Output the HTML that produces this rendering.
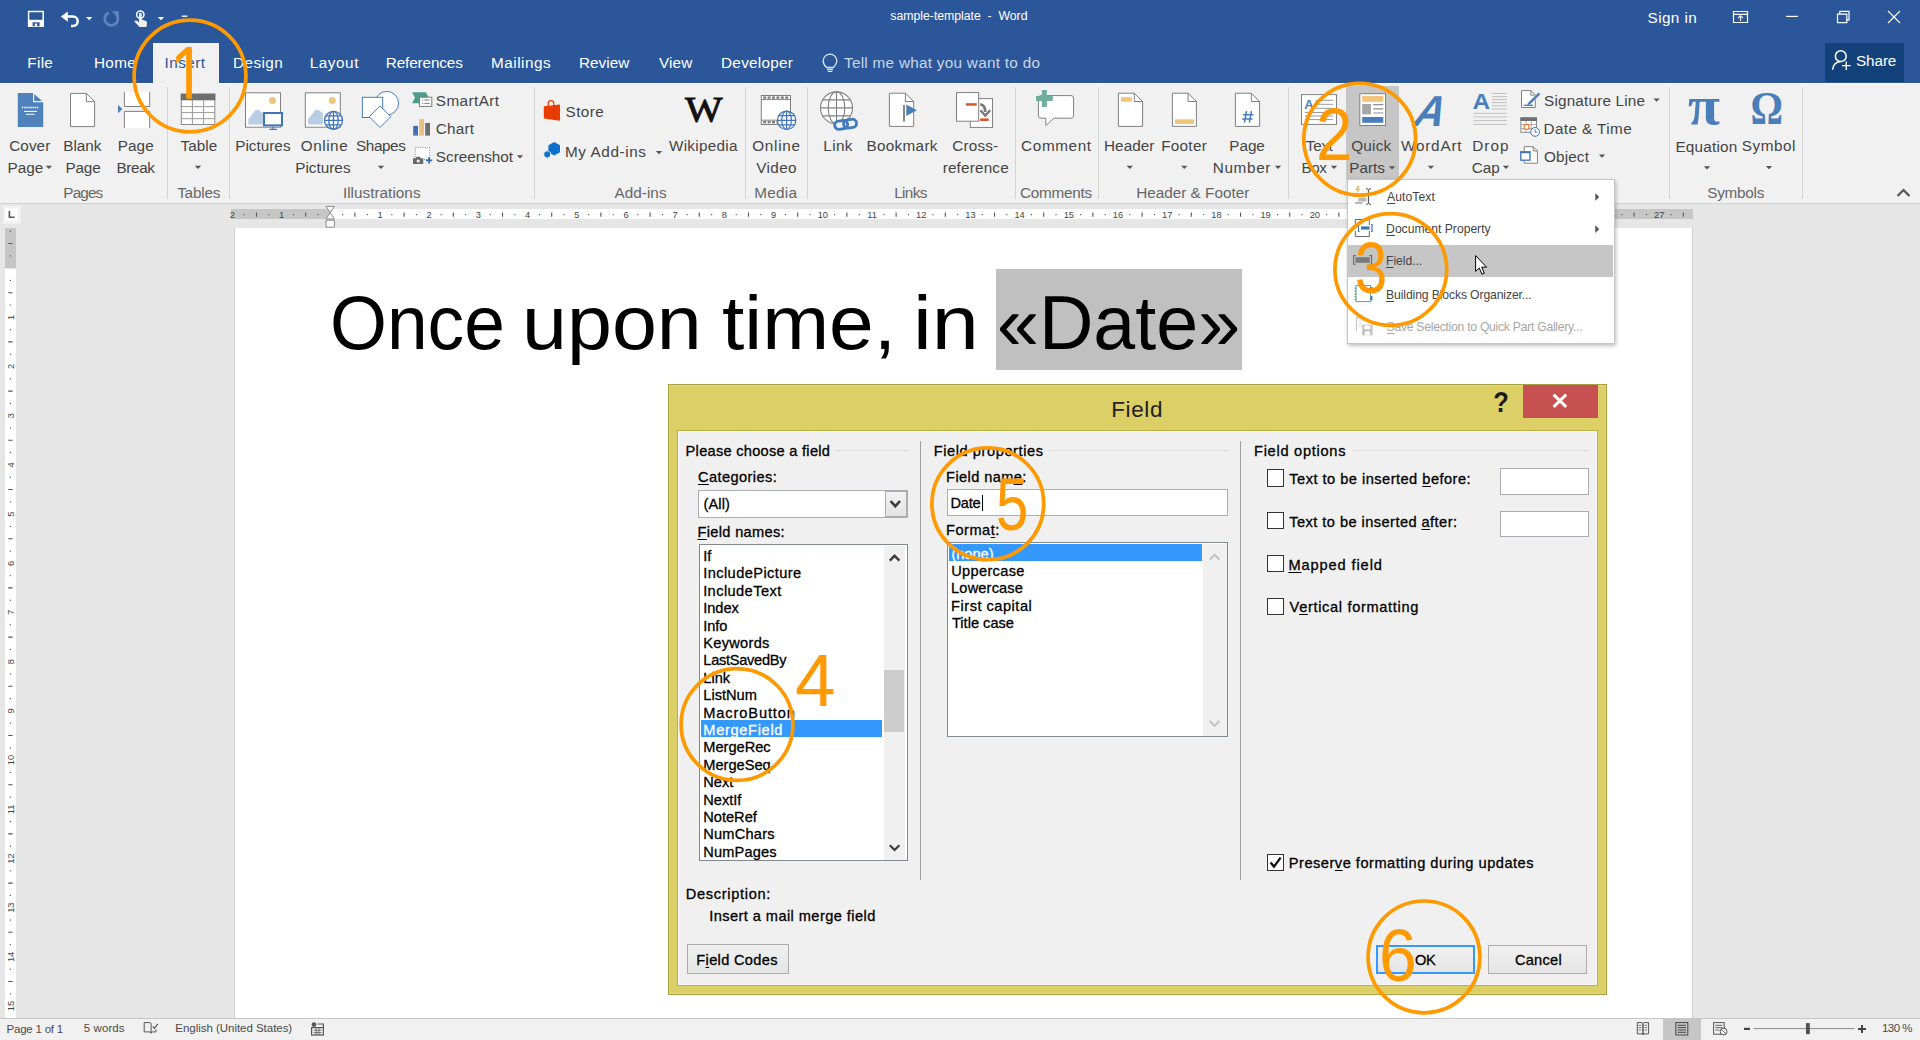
<!DOCTYPE html><html lang="en"><head><meta charset="utf-8"><title>sample-template - Word</title><style>
*{margin:0;padding:0;box-sizing:border-box}
html,body{width:1920px;height:1040px;overflow:hidden;background:#E6E6E6;font-family:"Liberation Sans",sans-serif}
.t{position:absolute;white-space:pre;line-height:1;display:block}
.t u{text-decoration:underline;text-decoration-thickness:1px;text-underline-offset:1.5px}
.a{position:absolute}
svg.L{position:absolute;left:0;top:0;width:1920px;height:1040px;overflow:visible}
.layer{position:absolute;left:0;top:0;width:1920px;height:1040px}
</style></head><body>
<div class="layer" id="app">
<div class="a" style="left:0.00px;top:0.00px;width:1920.00px;height:83.00px;background:#2B579A;"></div>
<div class="a" style="left:153.00px;top:43.00px;width:66.00px;height:40.00px;background:#F1F1F1;"></div>
<div class="a" style="left:1825.00px;top:43.00px;width:79.00px;height:38.80px;background:#13417A;"></div>
<div class="a" style="left:0.00px;top:83.00px;width:1920.00px;height:120.00px;background:#F1F1F1;"></div>
<div class="a" style="left:0.00px;top:82.60px;width:153.00px;height:1.20px;background:#FBFBFB;"></div>
<div class="a" style="left:219.00px;top:82.60px;width:1701.00px;height:1.20px;background:#FBFBFB;"></div>
<div class="a" style="left:0.00px;top:203.00px;width:1920.00px;height:1.00px;background:#D2D2D2;"></div>
<div class="a" style="left:1346.20px;top:86.10px;width:52.60px;height:93.90px;background:#C6C6C6;"></div>
<div class="a" style="left:166.80px;top:87.00px;width:1.00px;height:111.50px;background:#D4D4D4;"></div>
<div class="a" style="left:228.90px;top:87.00px;width:1.00px;height:111.50px;background:#D4D4D4;"></div>
<div class="a" style="left:533.90px;top:87.00px;width:1.00px;height:111.50px;background:#D4D4D4;"></div>
<div class="a" style="left:744.50px;top:87.00px;width:1.00px;height:111.50px;background:#D4D4D4;"></div>
<div class="a" style="left:807.20px;top:87.00px;width:1.00px;height:111.50px;background:#D4D4D4;"></div>
<div class="a" style="left:1015.10px;top:87.00px;width:1.00px;height:111.50px;background:#D4D4D4;"></div>
<div class="a" style="left:1097.80px;top:87.00px;width:1.00px;height:111.50px;background:#D4D4D4;"></div>
<div class="a" style="left:1288.00px;top:87.00px;width:1.00px;height:111.50px;background:#D4D4D4;"></div>
<div class="a" style="left:1668.90px;top:87.00px;width:1.00px;height:111.50px;background:#D4D4D4;"></div>
<div class="a" style="left:1801.50px;top:87.00px;width:1.00px;height:111.50px;background:#D4D4D4;"></div>
<div class="a" style="left:2.70px;top:206.00px;width:18.00px;height:18.00px;background:#F1F1F1;"></div>
<div class="a" style="left:4.50px;top:208.30px;width:13.80px;height:12.40px;background:#fff;"></div>
<div class="a" style="left:231.00px;top:209.30px;width:99.00px;height:10.00px;background:#C6C6C6;"></div>
<div class="a" style="left:330.00px;top:209.30px;width:1265.00px;height:10.00px;background:#fff;"></div>
<div class="a" style="left:1595.00px;top:209.30px;width:98.00px;height:10.00px;background:#C6C6C6;"></div>
<div class="a" style="left:4.70px;top:228.30px;width:11.20px;height:40.20px;background:#C6C6C6;"></div>
<div class="a" style="left:4.70px;top:268.50px;width:11.20px;height:749.00px;background:#fff;"></div>
<div class="a" style="left:233.80px;top:228.30px;width:1459.40px;height:789.30px;background:#fff;border-left:1px solid #CFCFCF;border-right:1px solid #CFCFCF;"></div>
<div class="a" style="left:996.40px;top:269.30px;width:245.30px;height:100.50px;background:#C0C0C0;"></div>
<div class="a" style="left:0.00px;top:1017.60px;width:1920.00px;height:22.40px;background:#F1F1F1;border-top:1px solid #C6C6C6;"></div>
<div class="a" style="left:1663.00px;top:1018.60px;width:37.60px;height:21.40px;background:#C6C6C6;"></div>
<svg class="L" viewBox="0 0 1920 1040"><path d="M28.6 11.6h14.6v14.6h-14.6z" fill="none" stroke="#fff" stroke-width="1.5"/><path d="M28.6 19.8h14.6v6.4h-14.6z" fill="#fff"/><path d="M32.6 22.3h7v4h-7z" fill="#2B579A"/><path d="M34.8 23.5h2.3v2.8h-2.3z" fill="#fff"/><path d="M60.8 16.6L67.8 11.4V21.8Z" fill="#fff"/><path d="M66.5 16.6H73a4.7 4.7 0 0 1 0 9.4H71" fill="none" stroke="#fff" stroke-width="2.5"/><path d="M86.0 17.0h6.4l-3.2 3.3z" fill="#fff"/><path d="M116.2 14.2a6.6 6.6 0 1 1 -7.4 -1.6" fill="none" stroke="#6485BC" stroke-width="2.6"/><path d="M111.5 11.2h7.4v7z" fill="#6485BC"/><circle cx="140.3" cy="14.6" r="3.7" fill="none" stroke="#fff" stroke-width="1.5"/><path d="M139 14.2a1.4 1.4 0 0 1 2.8 0v5.2l4.2 1.6q1.2 .6 1 2l-.5 4h-7l-5.2-5.6q1.2-1.6 2.8-.6l1.9 1.4z" fill="#EDEDED"/><path d="M157.8 17.0h6.4l-3.2 3.3z" fill="#fff"/><path d="M181.7 16.2h5.7" stroke="#fff" stroke-width="1.3"/><path d="M1733.5 11.5h14v11h-14zM1733.5 14.3h14" fill="none" stroke="#fff" stroke-width="1.2"/><path d="M1740.5 21v-5.2M1738 18.2l2.5-2.5 2.5 2.5" fill="none" stroke="#fff" stroke-width="1.1"/><path d="M1786 16.4h12" stroke="#fff" stroke-width="1.2"/><path d="M1837.5 14.2h9.3v8.4h-9.3z" fill="none" stroke="#fff" stroke-width="1.2"/><path d="M1839.8 14v-2.6h9.2v8.4h-2.2" fill="none" stroke="#fff" stroke-width="1.2"/><path d="M1888 11l12 12M1900 11l-12 12" stroke="#fff" stroke-width="1.2"/><circle cx="1840.8" cy="56.2" r="5.4" fill="none" stroke="#fff" stroke-width="1.5"/><path d="M1832.7 69.8q.4-7.6 8-8.3" fill="none" stroke="#fff" stroke-width="1.5"/><path d="M1842 65.6h8.6M1846.3 61.4v8.6" stroke="#fff" stroke-width="1.4"/><path d="M826.5 67.5q-3.3-3.6-3.3-6.6a6.8 6.8 0 0 1 13.6 0q0 3-3.3 6.6z" fill="none" stroke="#DCE4F1" stroke-width="1.3"/><path d="M827 69.4h6M827.6 71.4h4.8" stroke="#DCE4F1" stroke-width="1.3"/><path d="M17.8 92.9H33L43.2 102V126.9H17.8Z" fill="#4F81BD"/><path d="M33.6 92.9V101.6H43.2" fill="none" stroke="#F1F1F1" stroke-width="1.2"/><path d="M21.8 107.5H39" stroke="#fff" stroke-width="1.6" stroke-dasharray="1.2 .7"/><path d="M24 111.4H37M26 114.3H34.6" stroke="#fff" stroke-width="1"/><path d="M70.5 93.4H86.3L94.6 101.7V126.6H70.5Z" fill="#fff" stroke="#808080" stroke-width="1"/><path d="M86.3 93.4V101.7H94.6" fill="none" stroke="#808080" stroke-width="1"/><path d="M124.4 92V106.5H149.7V92" fill="#fff" stroke="#808080" stroke-width="1"/><path d="M124.4 128V111.4H149.7V128" fill="#fff" stroke="#808080" stroke-width="1"/><path d="M118 105l4.4 4.1-4.4 4.1z" fill="#4A7EBB"/><rect x="181.3" y="94.2" width="33.5" height="30.3" fill="#fff" stroke="#8A8A8A" stroke-width="1"/><rect x="180.8" y="93.7" width="34.5" height="6.6" fill="#6E6E6E"/><path d="M192.4 100V124.5M203.6 100V124.5M181.3 106.6H214.8M181.3 112.6H214.8M181.3 118.7H214.8" stroke="#9A9A9A" stroke-width="1" fill="none"/><rect x="245.5" y="92.8" width="35" height="34.4" fill="#fff" stroke="#808080" stroke-width="1"/><circle cx="272.5" cy="100.5" r="3.5" fill="#EFC57C"/><path d="M248.3 124.6V119.2L255.5 110H258.9L263.1 113.6V124.6Z" fill="#B9CDE5"/><rect x="264" y="113" width="18" height="12.4" fill="#fff" stroke="#3F74B8" stroke-width="2"/><path d="M273 126.4V129.3M269.4 129.4H276.8" stroke="#3F74B8" stroke-width="1.2"/><rect x="305.3" y="92.8" width="35" height="34.4" fill="#fff" stroke="#808080" stroke-width="1"/><circle cx="332.3" cy="100.5" r="3.5" fill="#EFC57C"/><path d="M308.1 124.6V119.2L315.3 110H318.7L322.9 113.6V124.6Z" fill="#B9CDE5"/><circle cx="333.5" cy="120.4" r="9.0" fill="#fff" stroke="#3F74B8" stroke-width="1.3"/><ellipse cx="333.5" cy="120.4" rx="4.7" ry="9.0" fill="none" stroke="#3F74B8" stroke-width="1.3"/><path d="M333.5 111.4V129.4M324.5 120.4H342.5M325.8 115.9H341.2M325.8 124.9H341.2" fill="none" stroke="#3F74B8" stroke-width="1.3"/><circle cx="386.8" cy="103.2" r="11.8" fill="#fff" stroke="#4A7EBB" stroke-width="1"/><rect x="362.4" y="97.3" width="20.3" height="20.2" fill="#fff" stroke="#4A7EBB" stroke-width="1"/><path d="M380 105.9L390.8 116.7 380 127.5 369.2 116.7Z" fill="#fff" stroke="#4A7EBB" stroke-width="1"/><path d="M412 92.3H426L428.6 97.8 426 103.2H412L415 97.8Z" fill="#4E9D8C"/><rect x="419.4" y="97.2" width="12.4" height="9.2" fill="#fff" stroke="#7A7A7A" stroke-width="1"/><path d="M422 100H423.2M424.4 100H429.6M422 103.4H423.2M424.4 103.4H429.6" stroke="#7A7A7A" stroke-width="1"/><rect x="413.2" y="125.9" width="4.8" height="9.7" fill="#3F6FB5"/><rect x="419.1" y="119.2" width="4.9" height="16.4" fill="#E8C182"/><rect x="425.2" y="123" width="4.8" height="12.6" fill="#6E6E6E"/><rect x="415.3" y="147.5" width="14.4" height="12" fill="#fff" stroke="#8A8A8A" stroke-width="1" stroke-dasharray="1 1.4"/><path d="M413 158.2h2.6l1-1.4h3.2l1 1.4h2.4v5.8H413z" fill="#6A6A6A"/><circle cx="418.2" cy="161" r="1.6" fill="#F1F1F1"/><path d="M426 160.3h6.2M429.1 157.2v6.2" stroke="#2E6BB8" stroke-width="1.8"/><path d="M516.8 155.3h6.4l-3.2 3.3z" fill="#555"/><path d="M548.2 106v-2.6a2.8 2.8 0 0 1 5.6 0V106" fill="none" stroke="#EA3E00" stroke-width="1.3"/><path d="M543.8 106.3L560 104.6V120.8L543.8 118.6Z" fill="#EA3E00"/><path d="M554.3 105.2v15" stroke="#C93400" stroke-width=".6"/><path d="M554.2 142l5.8 3.2v7l-5.8 3.4-5.8-3.4v-7z" fill="#0F6FCF"/><path d="M547.2 150.6l3.3 1.9v3.8l-3.3 1.9-3.3-1.9v-3.8z" fill="#0F6FCF" stroke="#F1F1F1" stroke-width=".8"/><path d="M655.8 150.9h6.4l-3.2 3.3z" fill="#555"/><rect x="761.3" y="95.5" width="29.2" height="29" fill="#fff" stroke="#808080" stroke-width="1"/><path d="M761.3 99.6H790.5M761.3 120.2H790.5" stroke="#808080" stroke-width="1"/><rect x="763.2" y="96.4" width="3" height="2.4" fill="#808080"/><rect x="763.2" y="121" width="3" height="2.4" fill="#808080"/><rect x="767.6" y="96.4" width="3" height="2.4" fill="#808080"/><rect x="767.6" y="121" width="3" height="2.4" fill="#808080"/><rect x="772.0" y="96.4" width="3" height="2.4" fill="#808080"/><rect x="772.0" y="121" width="3" height="2.4" fill="#808080"/><rect x="776.4" y="96.4" width="3" height="2.4" fill="#808080"/><rect x="776.4" y="121" width="3" height="2.4" fill="#808080"/><rect x="780.8" y="96.4" width="3" height="2.4" fill="#808080"/><rect x="780.8" y="121" width="3" height="2.4" fill="#808080"/><rect x="785.2" y="96.4" width="3" height="2.4" fill="#808080"/><rect x="785.2" y="121" width="3" height="2.4" fill="#808080"/><circle cx="786.6" cy="120.3" r="9.2" fill="#fff" stroke="#3F74B8" stroke-width="1.2"/><ellipse cx="786.6" cy="120.3" rx="4.8" ry="9.2" fill="none" stroke="#3F74B8" stroke-width="1.2"/><path d="M786.6 111.1V129.5M777.4 120.3H795.8M778.7 115.7H794.5M778.7 124.9H794.5" fill="none" stroke="#3F74B8" stroke-width="1.2"/><circle cx="836.5" cy="107.9" r="16.0" fill="#fff" stroke="#808080" stroke-width="1.1"/><ellipse cx="836.5" cy="107.9" rx="8.3" ry="16.0" fill="none" stroke="#808080" stroke-width="1.1"/><path d="M836.5 91.9V123.9M820.5 107.9H852.5M822.7 99.9H850.3M822.7 115.9H850.3" fill="none" stroke="#808080" stroke-width="1.1"/><g transform="rotate(-8 845.5 124.3)"><rect x="834.6" y="120.2" width="13" height="8.2" rx="4.1" fill="#F1F1F1" stroke="#3F7AC0" stroke-width="2.8"/><rect x="843.6" y="120.2" width="13" height="8.2" rx="4.1" fill="none" stroke="#3F7AC0" stroke-width="2.8"/></g><path d="M889.4 93.2H905.4L913.7 101.5V126.4H889.4Z" fill="#fff" stroke="#808080" stroke-width="1"/><path d="M905.4 93.2V101.5H913.7" fill="none" stroke="#808080" stroke-width="1"/><path d="M904 105V121.7" stroke="#6A6A6A" stroke-width="1.6"/><path d="M906.3 104.6L916.8 110.3 906.3 116Z" fill="#4A7EBB"/><rect x="970.3" y="98.6" width="22.2" height="28.8" fill="#fff" stroke="#808080" stroke-width="1"/><rect x="956.5" y="92.6" width="22.2" height="28.6" fill="#fff" stroke="#808080" stroke-width="1"/><rect x="966" y="103.2" width="10.7" height="2.5" fill="#D9532C"/><rect x="980.2" y="118.4" width="8.5" height="2.6" fill="#D9532C"/><path d="M980.3 104.4q5 .8 5 7.6" fill="none" stroke="#7A7A7A" stroke-width="2.8"/><path d="M980.4 110.2l4.9 5.4 4.9-5.4" fill="none" stroke="#7A7A7A" stroke-width="2.4"/><path d="M1041 95.6H1071q2.6 0 2.6 2.6V115.6q0 2.6-2.6 2.6H1053.8L1045.8 125.6V118.2H1041q-2.6 0-2.6-2.6V98.2q0-2.6 2.6-2.6Z" fill="#fff" stroke="#808080" stroke-width="1"/><path d="M1036 98.5H1052.8M1044.4 90V106.9" stroke="#6FAE9B" stroke-width="5"/><path d="M1118.4 93.2H1134.3L1142.6 101.5V126.4H1118.4Z" fill="#fff" stroke="#808080" stroke-width="1"/><path d="M1134.3 93.2V101.5H1142.6" fill="none" stroke="#808080" stroke-width="1"/><rect x="1121" y="97.2" width="10.8" height="4.5" fill="#EFC57C"/><path d="M1172.4 93.2H1188.1L1196.4 101.5V126.4H1172.4Z" fill="#fff" stroke="#808080" stroke-width="1"/><path d="M1188.1 93.2V101.5H1196.4" fill="none" stroke="#808080" stroke-width="1"/><rect x="1175" y="119.3" width="19" height="4.7" fill="#EFC57C"/><path d="M1235.4 93.2H1251.3L1259.6 101.5V126.4H1235.4Z" fill="#fff" stroke="#808080" stroke-width="1"/><path d="M1251.3 93.2V101.5H1259.6" fill="none" stroke="#808080" stroke-width="1"/><path d="M1246.5 111l-2 11.7M1251.4 111l-2 11.7M1243 114.8h10.4M1242.2 119h10.4" stroke="#4A7EBB" stroke-width="1.5" fill="none"/><path d="M1126.6 165.8h6.4l-3.2 3.3z" fill="#555"/><path d="M1181.1 165.8h6.4l-3.2 3.3z" fill="#555"/><path d="M1274.8 165.8h6.4l-3.2 3.3z" fill="#555"/><path d="M45.7 165.8h6.4l-3.2 3.3z" fill="#555"/><path d="M194.8 165.8h6.4l-3.2 3.3z" fill="#555"/><path d="M377.8 165.8h6.4l-3.2 3.3z" fill="#555"/><path d="M1330.8 165.8h6.4l-3.2 3.3z" fill="#555"/><path d="M1388.8 166.2h6.4l-3.2 3.3z" fill="#555"/><path d="M1427.7 165.8h6.4l-3.2 3.3z" fill="#555"/><path d="M1502.8 165.8h6.4l-3.2 3.3z" fill="#555"/><path d="M1703.8 166.3h6.4l-3.2 3.3z" fill="#555"/><path d="M1765.8 165.9h6.4l-3.2 3.3z" fill="#555"/><path d="M1653.4 98.5h6.4l-3.2 3.3z" fill="#555"/><path d="M1598.8 154.5h6.4l-3.2 3.3z" fill="#555"/><rect x="1301.5" y="94.6" width="35" height="29.8" fill="#fff" stroke="#808080" stroke-width="1"/><path d="M1315.5 100.3H1333M1315.5 104.3H1333M1315.5 108.3H1333M1305 112.5H1333M1305 116H1333M1305 119.6H1333" stroke="#9A9A9A" stroke-width="1"/><text x="1304.3" y="109.3" font-family="Liberation Sans, sans-serif" font-size="13" font-weight="bold" fill="#4A7EBB">A</text><rect x="1359.8" y="93.7" width="25.8" height="31.8" fill="#fff" stroke="#808080" stroke-width="1"/><rect x="1362.2" y="95.9" width="21.1" height="5.9" fill="#EFC57C"/><rect x="1362.2" y="104" width="8.8" height="10.4" fill="#A6A6A6"/><rect x="1362.2" y="117" width="21.1" height="5.8" fill="#4A7EBB"/><path d="M1373.2 104.6H1383.3M1373.2 108.8H1383.3M1373.2 113H1383.3" stroke="#8E8E8E" stroke-width="1.2"/><text x="0" y="0" font-family="Liberation Sans, sans-serif" font-size="42" font-weight="bold" fill="#4A7EBB" transform="translate(1410.6 125.7) skewX(-23) scale(.98 1.03)">A</text><text x="1472.6" y="109.3" font-family="Liberation Sans, sans-serif" font-size="22" font-weight="bold" fill="#4A7EBB" textLength="17.6" lengthAdjust="spacingAndGlyphs">A</text><path d="M1492 93.5H1507M1492 96.6H1507M1492 99.6H1507M1492 102.6H1507M1492 105.8H1507M1492 109.0H1507M1473.4 113.3H1507M1473.4 116.9H1507M1473.4 120.6H1507M1473.4 124.4H1507" stroke="#C0C0C0" stroke-width="1"/><path d="M1521.5 90.6H1530.8L1535.3 95.1V107.5H1521.5Z" fill="#fff" stroke="#808080" stroke-width="1"/><path d="M1530.8 90.6V95.1H1535.3" fill="none" stroke="#808080" stroke-width="1"/><path d="M1538.6 92.2L1540.6 94.2 1530 104.8 1527 105.6 1527.8 102.8Z" fill="#4A7EBB" stroke="#F1F1F1" stroke-width=".6"/><path d="M1523.6 105.3H1533" stroke="#4A7EBB" stroke-width="1.3"/><rect x="1520.9" y="117.9" width="15.6" height="14.4" fill="#fff" stroke="#8A8A8A" stroke-width="1"/><rect x="1520.4" y="117.4" width="16.6" height="3.6" fill="#6E6E6E"/><path d="M1526 121V132M1531.2 121V132M1521 124.6H1536.5M1521 128.6H1536.5" stroke="#9A9A9A" stroke-width=".8"/><rect x="1524.2" y="124.6" width="4.6" height="4.6" fill="#fff" stroke="#E07A3A" stroke-width="1.2"/><circle cx="1535.1" cy="131.9" r="4.4" fill="#fff" stroke="#3F74B8" stroke-width="1"/><path d="M1535.1 129.4V132.2H1537.2" fill="none" stroke="#3F74B8" stroke-width="1"/><path d="M1524.2 146.7H1533.2L1537.4 150.9V163.2H1524.2Z" fill="#fff" stroke="#808080" stroke-width="1"/><path d="M1533.2 146.7V150.9H1537.4" fill="none" stroke="#808080" stroke-width="1"/><rect x="1520.8" y="152.2" width="9.2" height="8" fill="#fff" stroke="#3F74B8" stroke-width="1.3"/><path d="M1520.2 152.2h10.4" stroke="#3F74B8" stroke-width="2"/><text x="1688" y="124.4" font-family="Liberation Serif, serif" font-size="54" font-weight="bold" fill="#4A7EBB" textLength="32" lengthAdjust="spacingAndGlyphs">π</text><text x="1750.6" y="123.6" font-family="Liberation Serif, serif" font-size="47" font-weight="bold" fill="#4A7EBB" textLength="32.5" lengthAdjust="spacingAndGlyphs">Ω</text><text x="685" y="121.6" font-family="Liberation Serif, serif" font-size="35.5" fill="#111" stroke="#111" stroke-width=".9" textLength="37.6" lengthAdjust="spacingAndGlyphs">W</text><g font-family="Liberation Sans, sans-serif" font-size="9.3" fill="#444"><text x="232.4" y="217.8" text-anchor="middle">2</text><text x="281.6" y="217.8" text-anchor="middle">1</text><text x="380.0" y="217.8" text-anchor="middle">1</text><text x="429.2" y="217.8" text-anchor="middle">2</text><text x="478.4" y="217.8" text-anchor="middle">3</text><text x="527.6" y="217.8" text-anchor="middle">4</text><text x="576.8" y="217.8" text-anchor="middle">5</text><text x="626.0" y="217.8" text-anchor="middle">6</text><text x="675.2" y="217.8" text-anchor="middle">7</text><text x="724.4" y="217.8" text-anchor="middle">8</text><text x="773.6" y="217.8" text-anchor="middle">9</text><text x="822.8" y="217.8" text-anchor="middle">10</text><text x="872.0" y="217.8" text-anchor="middle">11</text><text x="921.2" y="217.8" text-anchor="middle">12</text><text x="970.4" y="217.8" text-anchor="middle">13</text><text x="1019.6" y="217.8" text-anchor="middle">14</text><text x="1068.8" y="217.8" text-anchor="middle">15</text><text x="1118.0" y="217.8" text-anchor="middle">16</text><text x="1167.2" y="217.8" text-anchor="middle">17</text><text x="1216.4" y="217.8" text-anchor="middle">18</text><text x="1265.6" y="217.8" text-anchor="middle">19</text><text x="1314.8" y="217.8" text-anchor="middle">20</text><text x="1364.0" y="217.8" text-anchor="middle">21</text><text x="1413.2" y="217.8" text-anchor="middle">22</text><text x="1462.4" y="217.8" text-anchor="middle">23</text><text x="1511.6" y="217.8" text-anchor="middle">24</text><text x="1560.8" y="217.8" text-anchor="middle">25</text><text x="1610.0" y="217.8" text-anchor="middle">26</text><text x="1659.2" y="217.8" text-anchor="middle">27</text><text transform="translate(13.6 317.3) rotate(-90)" text-anchor="middle">1</text><text transform="translate(13.6 366.5) rotate(-90)" text-anchor="middle">2</text><text transform="translate(13.6 415.7) rotate(-90)" text-anchor="middle">3</text><text transform="translate(13.6 464.9) rotate(-90)" text-anchor="middle">4</text><text transform="translate(13.6 514.1) rotate(-90)" text-anchor="middle">5</text><text transform="translate(13.6 563.3) rotate(-90)" text-anchor="middle">6</text><text transform="translate(13.6 612.5) rotate(-90)" text-anchor="middle">7</text><text transform="translate(13.6 661.7) rotate(-90)" text-anchor="middle">8</text><text transform="translate(13.6 710.9) rotate(-90)" text-anchor="middle">9</text><text transform="translate(13.6 760.1) rotate(-90)" text-anchor="middle">10</text><text transform="translate(13.6 809.3) rotate(-90)" text-anchor="middle">11</text><text transform="translate(13.6 858.5) rotate(-90)" text-anchor="middle">12</text><text transform="translate(13.6 907.7) rotate(-90)" text-anchor="middle">13</text><text transform="translate(13.6 956.9) rotate(-90)" text-anchor="middle">14</text><text transform="translate(13.6 1006.1) rotate(-90)" text-anchor="middle">15</text></g><rect x="243.7" y="214.1" width="1.1" height="1.1" fill="#444"/><rect x="268.3" y="214.1" width="1.1" height="1.1" fill="#444"/><rect x="292.9" y="214.1" width="1.1" height="1.1" fill="#444"/><rect x="317.5" y="214.1" width="1.1" height="1.1" fill="#444"/><rect x="342.1" y="214.1" width="1.1" height="1.1" fill="#444"/><rect x="366.7" y="214.1" width="1.1" height="1.1" fill="#444"/><rect x="391.3" y="214.1" width="1.1" height="1.1" fill="#444"/><rect x="415.9" y="214.1" width="1.1" height="1.1" fill="#444"/><rect x="440.5" y="214.1" width="1.1" height="1.1" fill="#444"/><rect x="465.1" y="214.1" width="1.1" height="1.1" fill="#444"/><rect x="489.7" y="214.1" width="1.1" height="1.1" fill="#444"/><rect x="514.3" y="214.1" width="1.1" height="1.1" fill="#444"/><rect x="538.9" y="214.1" width="1.1" height="1.1" fill="#444"/><rect x="563.5" y="214.1" width="1.1" height="1.1" fill="#444"/><rect x="588.1" y="214.1" width="1.1" height="1.1" fill="#444"/><rect x="612.7" y="214.1" width="1.1" height="1.1" fill="#444"/><rect x="637.3" y="214.1" width="1.1" height="1.1" fill="#444"/><rect x="661.9" y="214.1" width="1.1" height="1.1" fill="#444"/><rect x="686.5" y="214.1" width="1.1" height="1.1" fill="#444"/><rect x="711.1" y="214.1" width="1.1" height="1.1" fill="#444"/><rect x="735.7" y="214.1" width="1.1" height="1.1" fill="#444"/><rect x="760.3" y="214.1" width="1.1" height="1.1" fill="#444"/><rect x="784.9" y="214.1" width="1.1" height="1.1" fill="#444"/><rect x="809.5" y="214.1" width="1.1" height="1.1" fill="#444"/><rect x="834.1" y="214.1" width="1.1" height="1.1" fill="#444"/><rect x="858.7" y="214.1" width="1.1" height="1.1" fill="#444"/><rect x="883.3" y="214.1" width="1.1" height="1.1" fill="#444"/><rect x="907.9" y="214.1" width="1.1" height="1.1" fill="#444"/><rect x="932.5" y="214.1" width="1.1" height="1.1" fill="#444"/><rect x="957.1" y="214.1" width="1.1" height="1.1" fill="#444"/><rect x="981.7" y="214.1" width="1.1" height="1.1" fill="#444"/><rect x="1006.3" y="214.1" width="1.1" height="1.1" fill="#444"/><rect x="1030.9" y="214.1" width="1.1" height="1.1" fill="#444"/><rect x="1055.5" y="214.1" width="1.1" height="1.1" fill="#444"/><rect x="1080.1" y="214.1" width="1.1" height="1.1" fill="#444"/><rect x="1104.7" y="214.1" width="1.1" height="1.1" fill="#444"/><rect x="1129.3" y="214.1" width="1.1" height="1.1" fill="#444"/><rect x="1153.9" y="214.1" width="1.1" height="1.1" fill="#444"/><rect x="1178.5" y="214.1" width="1.1" height="1.1" fill="#444"/><rect x="1203.1" y="214.1" width="1.1" height="1.1" fill="#444"/><rect x="1227.7" y="214.1" width="1.1" height="1.1" fill="#444"/><rect x="1252.3" y="214.1" width="1.1" height="1.1" fill="#444"/><rect x="1276.9" y="214.1" width="1.1" height="1.1" fill="#444"/><rect x="1301.5" y="214.1" width="1.1" height="1.1" fill="#444"/><rect x="1326.1" y="214.1" width="1.1" height="1.1" fill="#444"/><rect x="1350.7" y="214.1" width="1.1" height="1.1" fill="#444"/><rect x="1375.3" y="214.1" width="1.1" height="1.1" fill="#444"/><rect x="1399.9" y="214.1" width="1.1" height="1.1" fill="#444"/><rect x="1424.5" y="214.1" width="1.1" height="1.1" fill="#444"/><rect x="1449.1" y="214.1" width="1.1" height="1.1" fill="#444"/><rect x="1473.7" y="214.1" width="1.1" height="1.1" fill="#444"/><rect x="1498.3" y="214.1" width="1.1" height="1.1" fill="#444"/><rect x="1522.9" y="214.1" width="1.1" height="1.1" fill="#444"/><rect x="1547.5" y="214.1" width="1.1" height="1.1" fill="#444"/><rect x="1572.1" y="214.1" width="1.1" height="1.1" fill="#444"/><rect x="1596.7" y="214.1" width="1.1" height="1.1" fill="#444"/><rect x="1621.3" y="214.1" width="1.1" height="1.1" fill="#444"/><rect x="1645.9" y="214.1" width="1.1" height="1.1" fill="#444"/><rect x="1670.5" y="214.1" width="1.1" height="1.1" fill="#444"/><rect x="9.8" y="230.7" width="1.1" height="1.1" fill="#444"/><rect x="9.8" y="255.3" width="1.1" height="1.1" fill="#444"/><rect x="9.8" y="279.9" width="1.1" height="1.1" fill="#444"/><rect x="9.8" y="304.5" width="1.1" height="1.1" fill="#444"/><rect x="9.8" y="329.1" width="1.1" height="1.1" fill="#444"/><rect x="9.8" y="353.7" width="1.1" height="1.1" fill="#444"/><rect x="9.8" y="378.3" width="1.1" height="1.1" fill="#444"/><rect x="9.8" y="402.9" width="1.1" height="1.1" fill="#444"/><rect x="9.8" y="427.5" width="1.1" height="1.1" fill="#444"/><rect x="9.8" y="452.1" width="1.1" height="1.1" fill="#444"/><rect x="9.8" y="476.7" width="1.1" height="1.1" fill="#444"/><rect x="9.8" y="501.3" width="1.1" height="1.1" fill="#444"/><rect x="9.8" y="525.9" width="1.1" height="1.1" fill="#444"/><rect x="9.8" y="550.5" width="1.1" height="1.1" fill="#444"/><rect x="9.8" y="575.1" width="1.1" height="1.1" fill="#444"/><rect x="9.8" y="599.7" width="1.1" height="1.1" fill="#444"/><rect x="9.8" y="624.3" width="1.1" height="1.1" fill="#444"/><rect x="9.8" y="648.9" width="1.1" height="1.1" fill="#444"/><rect x="9.8" y="673.5" width="1.1" height="1.1" fill="#444"/><rect x="9.8" y="698.1" width="1.1" height="1.1" fill="#444"/><rect x="9.8" y="722.7" width="1.1" height="1.1" fill="#444"/><rect x="9.8" y="747.3" width="1.1" height="1.1" fill="#444"/><rect x="9.8" y="771.9" width="1.1" height="1.1" fill="#444"/><rect x="9.8" y="796.5" width="1.1" height="1.1" fill="#444"/><rect x="9.8" y="821.1" width="1.1" height="1.1" fill="#444"/><rect x="9.8" y="845.7" width="1.1" height="1.1" fill="#444"/><rect x="9.8" y="870.3" width="1.1" height="1.1" fill="#444"/><rect x="9.8" y="894.9" width="1.1" height="1.1" fill="#444"/><rect x="9.8" y="919.5" width="1.1" height="1.1" fill="#444"/><rect x="9.8" y="944.1" width="1.1" height="1.1" fill="#444"/><rect x="9.8" y="968.7" width="1.1" height="1.1" fill="#444"/><rect x="9.8" y="993.3" width="1.1" height="1.1" fill="#444"/><path d="M256.5 212.6V216.8M305.7 212.6V216.8M354.9 212.6V216.8M404.1 212.6V216.8M453.3 212.6V216.8M502.5 212.6V216.8M551.7 212.6V216.8M600.9 212.6V216.8M650.1 212.6V216.8M699.3 212.6V216.8M748.5 212.6V216.8M797.7 212.6V216.8M846.9 212.6V216.8M896.1 212.6V216.8M945.3 212.6V216.8M994.5 212.6V216.8M1043.7 212.6V216.8M1092.9 212.6V216.8M1142.1 212.6V216.8M1191.3 212.6V216.8M1240.5 212.6V216.8M1289.7 212.6V216.8M1338.9 212.6V216.8M1388.1 212.6V216.8M1437.3 212.6V216.8M1486.5 212.6V216.8M1535.7 212.6V216.8M1584.9 212.6V216.8M1634.1 212.6V216.8M1683.3 212.6V216.8M8.2 243.5H12.6M8.2 292.7H12.6M8.2 341.9H12.6M8.2 391.1H12.6M8.2 440.3H12.6M8.2 489.5H12.6M8.2 538.7H12.6M8.2 587.9H12.6M8.2 637.1H12.6M8.2 686.3H12.6M8.2 735.5H12.6M8.2 784.7H12.6M8.2 833.9H12.6M8.2 883.1H12.6M8.2 932.3H12.6M8.2 981.5H12.6" stroke="#555" stroke-width="1.1" fill="none"/><path d="M326 206.4H334.4L330.2 212.6Z M330.2 212.6L334.4 219H326Z M326 220.2H334.4V227.2H326Z" fill="#fff" stroke="#8A8A8A" stroke-width="1"/><path d="M9.4 211V217.2H14.6" fill="none" stroke="#555" stroke-width="1.6"/><path d="M144.2 1022.6h5.6q1.3 0 1.3 1.3v9.2q0-1.2-1.3-1.2h-5.6zM151.1 1033.2q0-1.3 1.3-1.3h3.6v-2.6" fill="none" stroke="#555" stroke-width="1"/><path d="M152.6 1026.4l1.8 2 3.4-4.6" fill="none" stroke="#555" stroke-width="1.2"/><circle cx="314" cy="1024.6" r="2.4" fill="#555"/><rect x="311.6" y="1027.6" width="11.8" height="7.4" fill="none" stroke="#555" stroke-width="1.2"/><path d="M317.6 1024h5.8v3" fill="none" stroke="#555" stroke-width="1.2"/><path d="M313.6 1030.2h8M313.6 1032.6h8M316.2 1028v7M319 1028v7" stroke="#555" stroke-width=".8"/><path d="M1637.3 1022.6h4.8l.9 .9v11.3l-.9-.9h-4.8zM1648.6 1022.6h-4.8l-.9 .9v11.3l.9-.9h4.8z" fill="none" stroke="#555" stroke-width="1"/><path d="M1638.6 1025.3h2.6M1638.6 1027.6h2.6M1638.6 1030h2.6M1644.6 1025.3h2.6M1644.6 1027.6h2.6M1644.6 1030h2.6" stroke="#555" stroke-width=".8"/><rect x="1675.8" y="1022.6" width="12" height="12.4" fill="none" stroke="#444" stroke-width="1"/><path d="M1677.6 1025.3h8.4M1677.6 1027.6h8.4M1677.6 1030h8.4M1677.6 1032.3h8.4" stroke="#444" stroke-width="1"/><rect x="1713.6" y="1022.6" width="10.6" height="11.6" fill="none" stroke="#555" stroke-width="1"/><path d="M1715.4 1025.3h7M1715.4 1027.6h7M1715.4 1030h4" stroke="#555" stroke-width=".9"/><circle cx="1723.6" cy="1031.6" r="3.4" fill="#F1F1F1" stroke="#555" stroke-width="1"/><path d="M1721.3 1029.4l4.6 4.4" stroke="#555" stroke-width=".9"/><path d="M1744 1028.9h6" stroke="#444" stroke-width="2.2"/><path d="M1753.8 1028.6H1854.3" stroke="#8A8A8A" stroke-width="1"/><rect x="1806" y="1023.1" width="3.8" height="11" fill="#505050"/><path d="M1858 1029h8M1862 1025v8" stroke="#444" stroke-width="2"/><path d="M1897.5 196l6-6 6 6" fill="none" stroke="#555" stroke-width="2.2"/></svg>
<span class="t" id="t0" style="left:890.36px;top:9.60px;font-size:12.30px;color:#fff;letter-spacing:-0.030px;">sample-template  -  Word</span>
<span class="t" id="t1" style="left:1647.61px;top:10.40px;font-size:15.30px;color:#fff;letter-spacing:0.385px;">Sign in</span>
<span class="t" id="t2" style="left:1856.01px;top:53.00px;font-size:15.30px;color:#fff;letter-spacing:-0.113px;">Share</span>
<span class="t" id="t3" style="left:27.34px;top:54.90px;font-size:15.30px;color:#fff;letter-spacing:0.293px;">File</span>
<span class="t" id="t4" style="left:94.04px;top:54.90px;font-size:15.30px;color:#fff;letter-spacing:0.274px;">Home</span>
<span class="t" id="t5" style="left:164.59px;top:54.90px;font-size:15.30px;color:#2B579A;letter-spacing:0.452px;">Insert</span>
<span class="t" id="t6" style="left:233.04px;top:54.90px;font-size:15.30px;color:#fff;letter-spacing:0.405px;">Design</span>
<span class="t" id="t7" style="left:309.74px;top:54.90px;font-size:15.30px;color:#fff;letter-spacing:0.546px;">Layout</span>
<span class="t" id="t8" style="left:385.74px;top:54.90px;font-size:15.30px;color:#fff;letter-spacing:-0.125px;">References</span>
<span class="t" id="t9" style="left:491.04px;top:54.90px;font-size:15.30px;color:#fff;letter-spacing:0.486px;">Mailings</span>
<span class="t" id="t10" style="left:579.04px;top:54.90px;font-size:15.30px;color:#fff;letter-spacing:0.012px;">Review</span>
<span class="t" id="t11" style="left:658.93px;top:54.90px;font-size:15.30px;color:#fff;letter-spacing:0.146px;">View</span>
<span class="t" id="t12" style="left:721.04px;top:54.90px;font-size:15.30px;color:#fff;letter-spacing:0.272px;">Developer</span>
<span class="t" id="t13" style="left:843.96px;top:54.90px;font-size:15.30px;color:#C9D5E9;letter-spacing:0.278px;">Tell me what you want to do</span>
<span class="t" id="t14" style="left:9.22px;top:137.80px;font-size:15.30px;color:#444;letter-spacing:0.055px;">Cover</span>
<span class="t" id="t15" style="left:7.44px;top:159.60px;font-size:15.30px;color:#444;letter-spacing:0.067px;">Page</span>
<span class="t" id="t16" style="left:63.34px;top:137.80px;font-size:15.30px;color:#444;letter-spacing:-0.033px;">Blank</span>
<span class="t" id="t17" style="left:65.44px;top:159.60px;font-size:15.30px;color:#444;letter-spacing:-0.166px;">Page</span>
<span class="t" id="t18" style="left:117.74px;top:137.80px;font-size:15.30px;color:#444;letter-spacing:0.067px;">Page</span>
<span class="t" id="t19" style="left:116.44px;top:159.60px;font-size:15.30px;color:#444;letter-spacing:-0.359px;">Break</span>
<span class="t" id="t20" style="left:180.46px;top:137.80px;font-size:15.30px;color:#444;letter-spacing:0.086px;">Table</span>
<span class="t" id="t21" style="left:235.24px;top:137.80px;font-size:15.30px;color:#444;letter-spacing:0.006px;">Pictures</span>
<span class="t" id="t22" style="left:300.78px;top:137.80px;font-size:15.30px;color:#444;letter-spacing:0.537px;">Online</span>
<span class="t" id="t23" style="left:295.24px;top:159.60px;font-size:15.30px;color:#444;letter-spacing:0.006px;">Pictures</span>
<span class="t" id="t24" style="left:356.01px;top:137.80px;font-size:15.30px;color:#444;letter-spacing:-0.409px;">Shapes</span>
<span class="t" id="t25" style="left:668.93px;top:137.80px;font-size:15.30px;color:#444;letter-spacing:0.282px;">Wikipedia</span>
<span class="t" id="t26" style="left:752.28px;top:137.80px;font-size:15.30px;color:#444;letter-spacing:0.697px;">Online</span>
<span class="t" id="t27" style="left:756.23px;top:159.60px;font-size:15.30px;color:#444;letter-spacing:0.388px;">Video</span>
<span class="t" id="t28" style="left:823.34px;top:137.80px;font-size:15.30px;color:#444;letter-spacing:0.357px;">Link</span>
<span class="t" id="t29" style="left:866.44px;top:137.80px;font-size:15.30px;color:#444;letter-spacing:0.310px;">Bookmark</span>
<span class="t" id="t30" style="left:952.22px;top:137.80px;font-size:15.30px;color:#444;letter-spacing:0.182px;">Cross-</span>
<span class="t" id="t31" style="left:942.68px;top:159.60px;font-size:15.30px;color:#444;letter-spacing:0.171px;">reference</span>
<span class="t" id="t32" style="left:1021.12px;top:137.80px;font-size:15.30px;color:#444;letter-spacing:0.613px;">Comment</span>
<span class="t" id="t33" style="left:1103.94px;top:137.80px;font-size:15.30px;color:#444;letter-spacing:0.067px;">Header</span>
<span class="t" id="t34" style="left:1161.24px;top:137.80px;font-size:15.30px;color:#444;letter-spacing:0.258px;">Footer</span>
<span class="t" id="t35" style="left:1229.34px;top:137.80px;font-size:15.30px;color:#444;letter-spacing:-0.066px;">Page</span>
<span class="t" id="t36" style="left:1212.74px;top:159.60px;font-size:15.30px;color:#444;letter-spacing:0.661px;">Number</span>
<span class="t" id="t37" style="left:1305.86px;top:137.80px;font-size:15.30px;color:#444;letter-spacing:-0.369px;">Text</span>
<span class="t" id="t38" style="left:1301.44px;top:159.60px;font-size:15.30px;color:#444;letter-spacing:-0.470px;">Box</span>
<span class="t" id="t39" style="left:1351.28px;top:137.80px;font-size:15.30px;color:#444;letter-spacing:0.198px;">Quick</span>
<span class="t" id="t40" style="left:1349.34px;top:159.60px;font-size:15.30px;color:#444;letter-spacing:-0.024px;">Parts</span>
<span class="t" id="t41" style="left:1400.93px;top:137.80px;font-size:15.30px;color:#444;letter-spacing:0.809px;">WordArt</span>
<span class="t" id="t42" style="left:1472.24px;top:137.80px;font-size:15.30px;color:#444;letter-spacing:1.080px;">Drop</span>
<span class="t" id="t43" style="left:1471.72px;top:159.60px;font-size:15.30px;color:#444;letter-spacing:-0.072px;">Cap</span>
<span class="t" id="t44" style="left:1675.44px;top:138.70px;font-size:15.30px;color:#444;letter-spacing:0.194px;">Equation</span>
<span class="t" id="t45" style="left:1741.81px;top:137.80px;font-size:15.30px;color:#444;letter-spacing:0.521px;">Symbol</span>
<span class="t" id="t46" style="left:435.81px;top:92.60px;font-size:15.30px;color:#444;letter-spacing:0.423px;">SmartArt</span>
<span class="t" id="t47" style="left:435.72px;top:120.70px;font-size:15.30px;color:#444;letter-spacing:0.246px;">Chart</span>
<span class="t" id="t48" style="left:435.81px;top:148.60px;font-size:15.30px;color:#444;letter-spacing:-0.009px;">Screenshot</span>
<span class="t" id="t49" style="left:565.51px;top:104.40px;font-size:15.30px;color:#444;letter-spacing:0.453px;">Store</span>
<span class="t" id="t50" style="left:564.94px;top:144.40px;font-size:15.30px;color:#444;letter-spacing:0.593px;">My Add-ins</span>
<span class="t" id="t51" style="left:1544.01px;top:92.60px;font-size:15.30px;color:#444;letter-spacing:0.186px;">Signature Line</span>
<span class="t" id="t52" style="left:1543.44px;top:120.70px;font-size:15.30px;color:#444;letter-spacing:0.406px;">Date &amp; Time</span>
<span class="t" id="t53" style="left:1543.98px;top:148.60px;font-size:15.30px;color:#444;letter-spacing:0.144px;">Object</span>
<span class="t" id="t54" style="left:63.34px;top:184.60px;font-size:15.30px;color:#666;letter-spacing:-0.867px;">Pages</span>
<span class="t" id="t55" style="left:177.16px;top:184.60px;font-size:15.30px;color:#666;letter-spacing:-0.204px;">Tables</span>
<span class="t" id="t56" style="left:342.89px;top:184.60px;font-size:15.30px;color:#666;letter-spacing:0.024px;">Illustrations</span>
<span class="t" id="t57" style="left:614.57px;top:184.60px;font-size:15.30px;color:#666;letter-spacing:0.018px;">Add-ins</span>
<span class="t" id="t58" style="left:754.34px;top:184.60px;font-size:15.30px;color:#666;letter-spacing:0.246px;">Media</span>
<span class="t" id="t59" style="left:894.14px;top:184.60px;font-size:15.30px;color:#666;letter-spacing:-0.578px;">Links</span>
<span class="t" id="t60" style="left:1020.02px;top:184.60px;font-size:15.30px;color:#666;letter-spacing:-0.246px;">Comments</span>
<span class="t" id="t61" style="left:1136.24px;top:184.60px;font-size:15.30px;color:#666;letter-spacing:-0.006px;">Header &amp; Footer</span>
<span class="t" id="t62" style="left:1707.31px;top:184.60px;font-size:15.30px;color:#666;letter-spacing:-0.268px;">Symbols</span>
<span class="t" id="t63" style="left:6.56px;top:1023.60px;font-size:11.50px;color:#4A4A4A;letter-spacing:-0.222px;">Page 1 of 1</span>
<span class="t" id="t64" style="left:83.84px;top:1023.10px;font-size:11.50px;color:#4A4A4A;letter-spacing:0.082px;">5 words</span>
<span class="t" id="t65" style="left:175.36px;top:1023.10px;font-size:11.50px;color:#4A4A4A;letter-spacing:-0.035px;">English (United States)</span>
<span class="t" id="t66" style="left:1881.92px;top:1023.00px;font-size:11.50px;color:#4A4A4A;letter-spacing:-0.531px;">130 %</span>
<span class="t" id="t67" style="left:330.43px;top:284.60px;font-size:76.60px;color:#000;transform:scaleX(0.9554);transform-origin:0 0;">Once</span>
<span class="t" id="t68" style="left:522.35px;top:284.60px;font-size:76.60px;color:#000;transform:scaleX(1.0551);transform-origin:0 0;">upon</span>
<span class="t" id="t69" style="left:721.68px;top:284.60px;font-size:76.60px;color:#000;transform:scaleX(1.0485);transform-origin:0 0;">time,</span>
<span class="t" id="t70" style="left:912.54px;top:284.60px;font-size:76.60px;color:#000;transform:scaleX(1.1045);transform-origin:0 0;">in</span>
<span class="t" id="t71" style="left:997.44px;top:284.60px;font-size:76.60px;color:#000;transform:scaleX(0.9843);transform-origin:0 0;">«Date»</span>
</div>
<div class="layer" id="menu">
<div class="a" style="left:1346.70px;top:178.70px;width:267.90px;height:165.40px;background:#fff;border:1px solid #C6C6C6;box-shadow:1px 2px 4px rgba(0,0,0,.25);"></div>
<div class="a" style="left:1348.00px;top:245.20px;width:265.00px;height:31.60px;background:#C6C6C6;"></div>
<svg class="L" viewBox="0 0 1920 1040"><path d="M1357.5 186l-2.4 4.2h2.6l-1.6 3.6 4.6-5h-2.6l1.6-2.8z" fill="#E8BC6F"/><path d="M1355 196.5h7.5M1355 203h7.5" stroke="#7A7A7A" stroke-width="1.1"/><rect x="1358.3" y="197.8" width="8.2" height="3.8" fill="#B8B8B8"/><path d="M1366 188.5q2.4 0 2.4 2v12q0 2-2.4 2M1371 188.5q-2.4 0-2.4 2v12q0 2 2.4 2" fill="none" stroke="#555" stroke-width="1"/><path d="M1355.3 225v-5.5h14v5.5M1355.3 231v5.5h14v-5.5" fill="none" stroke="#6A6A6A" stroke-width="1"/><path d="M1359.5 224.5h-1v7h1M1371 224.5h1v7h-1" fill="none" stroke="#3F74B8" stroke-width="1.2"/><rect x="1361" y="226.4" width="8.6" height="3.2" fill="#3F74B8"/><path d="M1355.8 255.6h-2.2v8.6h2.2M1369.4 255.6h2.2v8.6h-2.2" fill="none" stroke="#6A6A6A" stroke-width="1.1"/><rect x="1355.4" y="257.2" width="14.4" height="5.6" fill="#7A7A7A"/><rect x="1356" y="285.6" width="14.6" height="16" fill="#fff" stroke="#5FA08C" stroke-width="1"/><path d="M1355.4 287.5v12.5" stroke="#5FA08C" stroke-width="1.6" stroke-dasharray="1.4 1.4"/><rect x="1370.6" y="287" width="1.8" height="4" fill="#D9532C"/><rect x="1370.6" y="296" width="1.8" height="4.4" fill="#3F74B8"/><path d="M1356.4 331.5v-14h9.6" fill="none" stroke="#BDBDBD" stroke-width="1"/><path d="M1358.6 320h5M1358.6 323h3M1358.6 326h3" stroke="#CFCFCF" stroke-width="1.2"/><rect x="1362.2" y="324.6" width="10.4" height="10.8" fill="#C4C4C4"/><rect x="1364.4" y="325.6" width="6" height="3.6" fill="#fff"/><rect x="1365" y="331.4" width="4.8" height="4" fill="#fff"/><path d="M1595.3 193v7.8l3.9-3.9z" fill="#555"/><path d="M1595.3 225.3v7.8l3.9-3.9z" fill="#555"/></svg>
<span class="t" id="t72" style="left:1387.08px;top:191.20px;font-size:12.20px;color:#444;letter-spacing:0.039px;"><u>A</u>utoText</span>
<span class="t" id="t73" style="left:1386.10px;top:223.10px;font-size:12.20px;color:#444;letter-spacing:-0.031px;"><u>D</u>ocument Property</span>
<span class="t" id="t74" style="left:1386.10px;top:255.10px;font-size:12.20px;color:#444;letter-spacing:-0.068px;"><u>F</u>ield...</span>
<span class="t" id="t75" style="left:1386.10px;top:289.20px;font-size:12.20px;color:#444;letter-spacing:-0.127px;"><u>B</u>uilding Blocks Organizer...</span>
<span class="t" id="t76" style="left:1386.55px;top:320.70px;font-size:12.20px;color:#A6A6A6;letter-spacing:-0.272px;"><u>S</u>ave Selection to Quick Part Gallery...</span>
</div>
<div class="layer" id="dialog">
<div class="a" style="left:668.00px;top:384.10px;width:939.00px;height:610.80px;background:#DBCF65;border:1px solid #A8A044;box-shadow:inset 0 0 0 1px #E3D66B;"></div>
<div class="a" style="left:1523.20px;top:385.40px;width:74.50px;height:32.60px;background:#C75050;"></div>
<div class="a" style="left:677.00px;top:430.30px;width:920.60px;height:555.70px;background:#F0F0F0;border:1.6px solid #BDB040;box-shadow:inset 0 0 0 1.3px #F8F8FC;"></div>
<div class="a" style="left:836.00px;top:449.60px;width:71.50px;height:1.00px;background:#DCDCDC;"></div>
<div class="a" style="left:1049.00px;top:449.60px;width:179.00px;height:1.00px;background:#DCDCDC;"></div>
<div class="a" style="left:1352.80px;top:449.60px;width:235.60px;height:1.00px;background:#DCDCDC;"></div>
<div class="a" style="left:920.00px;top:441.00px;width:1.30px;height:439.00px;background:#A0A0A0;"></div>
<div class="a" style="left:1240.00px;top:441.00px;width:1.30px;height:439.00px;background:#A0A0A0;"></div>
<div class="a" style="left:698.40px;top:489.60px;width:209.50px;height:28.30px;background:#fff;border:1.4px solid #ABADB3;"></div>
<div class="a" style="left:884.70px;top:490.60px;width:22.20px;height:26.30px;background:linear-gradient(#F2F2F2,#E4E4E4);border:1.4px solid #ACACAC;"></div>
<div class="a" style="left:698.60px;top:544.40px;width:209.30px;height:316.60px;background:#fff;border:1.4px solid #828790;"></div>
<div class="a" style="left:884.10px;top:545.80px;width:21.10px;height:313.80px;background:#F0F0F0;"></div>
<div class="a" style="left:884.10px;top:669.70px;width:19.80px;height:62.10px;background:#CDCDCD;"></div>
<div class="a" style="left:701.00px;top:720.20px;width:181.20px;height:17.10px;background:#3399FF;"></div>
<div class="a" style="left:947.30px;top:489.30px;width:281.00px;height:26.40px;background:#fff;border:1.4px solid #ABADB3;"></div>
<div class="a" style="left:982.30px;top:494.50px;width:1.10px;height:16.50px;background:#000;"></div>
<div class="a" style="left:947.30px;top:541.70px;width:281.00px;height:195.60px;background:#fff;border:1.4px solid #828790;"></div>
<div class="a" style="left:1203.00px;top:543.50px;width:24.00px;height:192.20px;background:#F0F0F0;"></div>
<div class="a" style="left:949.30px;top:544.30px;width:253.00px;height:16.70px;background:#3399FF;"></div>
<div class="a" style="left:1500.20px;top:468.00px;width:88.60px;height:26.60px;background:#fff;border:1.4px solid #ABADB3;"></div>
<div class="a" style="left:1500.20px;top:510.80px;width:88.60px;height:26.20px;background:#fff;border:1.4px solid #ABADB3;"></div>
<div class="a" style="left:1267.00px;top:469.40px;width:17.20px;height:17.20px;background:#fff;border:1.3px solid #333;"></div>
<div class="a" style="left:1267.00px;top:511.90px;width:17.20px;height:17.20px;background:#fff;border:1.3px solid #333;"></div>
<div class="a" style="left:1267.00px;top:554.80px;width:17.20px;height:17.20px;background:#fff;border:1.3px solid #333;"></div>
<div class="a" style="left:1267.00px;top:597.60px;width:17.20px;height:17.20px;background:#fff;border:1.3px solid #333;"></div>
<div class="a" style="left:1267.00px;top:853.80px;width:17.20px;height:17.20px;background:#fff;border:1.3px solid #333;"></div>
<div class="a" style="left:686.60px;top:944.30px;width:102.60px;height:29.40px;background:linear-gradient(#F0F0F0,#E5E5E5);border:1.4px solid #ACACAC;"></div>
<div class="a" style="left:1376.20px;top:944.50px;width:98.60px;height:29.20px;background:linear-gradient(#F0F0F0,#E5E5E5);border:2px solid #3399FF;"></div>
<div class="a" style="left:1488.00px;top:944.50px;width:99.00px;height:29.20px;background:linear-gradient(#F0F0F0,#E5E5E5);border:1.4px solid #ACACAC;"></div>
<svg class="L" viewBox="0 0 1920 1040"><text x="0" y="0" font-family="Liberation Sans, sans-serif" font-size="29" font-weight="bold" fill="#1a1a1a" transform="translate(1493.3 411.6) scale(.88 1)">?</text><path d="M1553.6 394.6l12.6 12.2M1566.2 394.6l-12.6 12.2" stroke="#fff" stroke-width="3"/><path d="M890.6 501l4.7 5.2 4.7-5.2" fill="none" stroke="#3C3C3C" stroke-width="2.6"/><path d="M889.8 560.6l4.8-4.8 4.8 4.8" fill="none" stroke="#3C3C3C" stroke-width="2.4"/><path d="M889.8 845.2l4.8 4.8 4.8-4.8" fill="none" stroke="#3C3C3C" stroke-width="2.2"/><path d="M1209.8 559.6l4.8-4.8 4.8 4.8" fill="none" stroke="#BFBFBF" stroke-width="1.8"/><path d="M1209.8 721l4.8 4.8 4.8-4.8" fill="none" stroke="#BFBFBF" stroke-width="1.8"/><path d="M1270.6 862.6l3.4 4 6.6-9" fill="none" stroke="#111" stroke-width="2.3"/></svg>
<span class="t" id="t77" style="left:1111.15px;top:398.80px;font-size:22.50px;color:#222;letter-spacing:0.629px;">Field</span>
<span class="t" id="t78" style="left:685.60px;top:444.10px;font-size:14.60px;color:#000;letter-spacing:0.280px;-webkit-text-stroke:0.3px #000;">Please choose a field</span>
<span class="t" id="t79" style="left:933.70px;top:444.10px;font-size:14.60px;color:#000;letter-spacing:0.582px;-webkit-text-stroke:0.3px #000;">Field properties</span>
<span class="t" id="t80" style="left:1254.00px;top:444.10px;font-size:14.60px;color:#000;letter-spacing:0.731px;-webkit-text-stroke:0.3px #000;">Field options</span>
<span class="t" id="t81" style="left:697.96px;top:470.30px;font-size:14.60px;color:#000;letter-spacing:0.413px;-webkit-text-stroke:0.3px #000;"><u>C</u>ategories:</span>
<span class="t" id="t82" style="left:703.49px;top:496.70px;font-size:14.60px;color:#000;letter-spacing:0.114px;-webkit-text-stroke:0.3px #000;">(All)</span>
<span class="t" id="t83" style="left:697.50px;top:525.00px;font-size:14.60px;color:#000;letter-spacing:0.324px;-webkit-text-stroke:0.3px #000;"><u>F</u>ield names:</span>
<span class="t" id="t84" style="left:946.10px;top:470.30px;font-size:14.60px;color:#000;letter-spacing:0.397px;-webkit-text-stroke:0.3px #000;">Field nam<u>e</u>:</span>
<span class="t" id="t85" style="left:950.50px;top:496.00px;font-size:14.60px;color:#000;letter-spacing:-0.227px;-webkit-text-stroke:0.3px #000;">Date</span>
<span class="t" id="t86" style="left:946.10px;top:522.60px;font-size:14.60px;color:#000;letter-spacing:0.489px;-webkit-text-stroke:0.3px #000;">Forma<u>t</u>:</span>
<span class="t" id="t87" style="left:703.15px;top:548.90px;font-size:14.60px;color:#000;-webkit-text-stroke:0.3px #000;">If</span>
<span class="t" id="t88" style="left:703.15px;top:566.30px;font-size:14.60px;color:#000;letter-spacing:0.432px;-webkit-text-stroke:0.3px #000;">IncludePicture</span>
<span class="t" id="t89" style="left:703.15px;top:583.70px;font-size:14.60px;color:#000;letter-spacing:0.423px;-webkit-text-stroke:0.3px #000;">IncludeText</span>
<span class="t" id="t90" style="left:703.15px;top:601.10px;font-size:14.60px;color:#000;-webkit-text-stroke:0.3px #000;">Index</span>
<span class="t" id="t91" style="left:703.15px;top:618.50px;font-size:14.60px;color:#000;-webkit-text-stroke:0.3px #000;">Info</span>
<span class="t" id="t92" style="left:703.30px;top:635.90px;font-size:14.60px;color:#000;letter-spacing:0.278px;-webkit-text-stroke:0.3px #000;">Keywords</span>
<span class="t" id="t93" style="left:703.30px;top:653.30px;font-size:14.60px;color:#000;letter-spacing:-0.277px;-webkit-text-stroke:0.3px #000;">LastSavedBy</span>
<span class="t" id="t94" style="left:703.30px;top:670.70px;font-size:14.60px;color:#000;-webkit-text-stroke:0.3px #000;">Link</span>
<span class="t" id="t95" style="left:703.30px;top:688.10px;font-size:14.60px;color:#000;-webkit-text-stroke:0.3px #000;">ListNum</span>
<span class="t" id="t96" style="left:703.30px;top:705.50px;font-size:14.60px;color:#000;letter-spacing:0.890px;-webkit-text-stroke:0.3px #000;">MacroButton</span>
<span class="t" id="t97" style="left:703.30px;top:722.90px;font-size:14.60px;color:#fff;letter-spacing:0.682px;-webkit-text-stroke:0.3px #fff;">MergeField</span>
<span class="t" id="t98" style="left:703.30px;top:740.30px;font-size:14.60px;color:#000;-webkit-text-stroke:0.3px #000;">MergeRec</span>
<span class="t" id="t99" style="left:703.30px;top:757.70px;font-size:14.60px;color:#000;-webkit-text-stroke:0.3px #000;">MergeSeq</span>
<span class="t" id="t100" style="left:703.30px;top:775.10px;font-size:14.60px;color:#000;-webkit-text-stroke:0.3px #000;">Next</span>
<span class="t" id="t101" style="left:703.30px;top:792.50px;font-size:14.60px;color:#000;-webkit-text-stroke:0.3px #000;">NextIf</span>
<span class="t" id="t102" style="left:703.30px;top:809.90px;font-size:14.60px;color:#000;-webkit-text-stroke:0.3px #000;">NoteRef</span>
<span class="t" id="t103" style="left:703.30px;top:827.30px;font-size:14.60px;color:#000;letter-spacing:0.211px;-webkit-text-stroke:0.3px #000;">NumChars</span>
<span class="t" id="t104" style="left:703.30px;top:844.70px;font-size:14.60px;color:#000;letter-spacing:0.146px;-webkit-text-stroke:0.3px #000;">NumPages</span>
<span class="t" id="t105" style="left:951.39px;top:546.50px;font-size:14.60px;color:#fff;-webkit-text-stroke:0.3px #fff;">(none)</span>
<span class="t" id="t106" style="left:951.17px;top:563.95px;font-size:14.60px;color:#000;letter-spacing:0.337px;-webkit-text-stroke:0.3px #000;">Uppercase</span>
<span class="t" id="t107" style="left:951.10px;top:581.40px;font-size:14.60px;color:#000;letter-spacing:0.159px;-webkit-text-stroke:0.3px #000;">Lowercase</span>
<span class="t" id="t108" style="left:951.10px;top:598.85px;font-size:14.60px;color:#000;letter-spacing:0.505px;-webkit-text-stroke:0.3px #000;">First capital</span>
<span class="t" id="t109" style="left:951.97px;top:616.30px;font-size:14.60px;color:#000;letter-spacing:0.006px;-webkit-text-stroke:0.3px #000;">Title case</span>
<span class="t" id="t110" style="left:1289.27px;top:472.30px;font-size:14.60px;color:#000;letter-spacing:0.484px;-webkit-text-stroke:0.3px #000;">Text to be inserted <u>b</u>efore:</span>
<span class="t" id="t111" style="left:1289.27px;top:514.80px;font-size:14.60px;color:#000;letter-spacing:0.447px;-webkit-text-stroke:0.3px #000;">Text to be inserted <u>a</u>fter:</span>
<span class="t" id="t112" style="left:1288.40px;top:557.60px;font-size:14.60px;color:#000;letter-spacing:0.904px;-webkit-text-stroke:0.3px #000;"><u>M</u>apped field</span>
<span class="t" id="t113" style="left:1289.54px;top:600.00px;font-size:14.60px;color:#000;letter-spacing:0.665px;-webkit-text-stroke:0.3px #000;">V<u>e</u>rtical formatting</span>
<span class="t" id="t114" style="left:1288.80px;top:856.30px;font-size:14.60px;color:#000;letter-spacing:0.508px;-webkit-text-stroke:0.3px #000;">Preser<u>v</u>e formatting during updates</span>
<span class="t" id="t115" style="left:685.80px;top:886.90px;font-size:14.60px;color:#000;letter-spacing:0.679px;-webkit-text-stroke:0.3px #000;">Description:</span>
<span class="t" id="t116" style="left:709.15px;top:909.10px;font-size:14.60px;color:#000;letter-spacing:0.436px;-webkit-text-stroke:0.3px #000;">Insert a mail merge field</span>
<span class="t" id="t117" style="left:696.30px;top:952.50px;font-size:14.60px;color:#000;letter-spacing:0.333px;-webkit-text-stroke:0.3px #000;">F<u>i</u>eld Codes</span>
<span class="t" id="t118" style="left:1414.91px;top:952.70px;font-size:14.60px;color:#000;letter-spacing:-0.338px;-webkit-text-stroke:0.3px #000;">OK</span>
<span class="t" id="t119" style="left:1514.96px;top:952.70px;font-size:14.60px;color:#000;letter-spacing:0.256px;-webkit-text-stroke:0.3px #000;">Cancel</span>
</div>
<div class="layer" id="steps">
<svg class="L" viewBox="0 0 1920 1040"><circle cx="190.0" cy="76.0" r="55.9" fill="none" stroke="#FF9900" stroke-width="3.7"/><circle cx="1359.7" cy="139.2" r="55.9" fill="none" stroke="#FF9900" stroke-width="3.7"/><circle cx="1390.8" cy="269.5" r="55.9" fill="none" stroke="#FF9900" stroke-width="3.7"/><circle cx="737.0" cy="724.5" r="55.9" fill="none" stroke="#FF9900" stroke-width="3.7"/><circle cx="987.8" cy="503.8" r="55.9" fill="none" stroke="#FF9900" stroke-width="3.7"/><circle cx="1424.0" cy="956.9" r="55.9" fill="none" stroke="#FF9900" stroke-width="3.7"/><path d="M1475.6 255.6v15.8l3.7-3.4 2.6 6.2 2.4-1-2.6-6h4.9z" fill="#fff" stroke="#000" stroke-width="1" stroke-linejoin="miter"/></svg>
<span class="t" id="t120" style="left:170.10px;top:34.60px;font-size:84.80px;color:#FF9900;transform:scaleX(.76);transform-origin:0 0;clip-path:inset(0 0 20.6px 0);">1</span>
<span class="t" id="t121" style="left:1315.70px;top:98.00px;font-size:73.76px;color:#FF9900;transform:scaleX(0.890);transform-origin:0 0;">2</span>
<span class="t" id="t122" style="left:1354.60px;top:231.89px;font-size:72.46px;color:#FF9900;transform:scaleX(0.798);transform-origin:0 0;">3</span>
<span class="t" id="t123" style="left:794.83px;top:643.90px;font-size:73.98px;color:#FF9900;transform:scaleX(0.984);transform-origin:0 0;">4</span>
<span class="t" id="t124" style="left:995.87px;top:466.57px;font-size:74.81px;color:#FF9900;transform:scaleX(0.778);transform-origin:0 0;">5</span>
<span class="t" id="t125" style="left:1379.36px;top:918.17px;font-size:74.58px;color:#FF9900;transform:scaleX(0.910);transform-origin:0 0;">6</span>
</div>
</body></html>
